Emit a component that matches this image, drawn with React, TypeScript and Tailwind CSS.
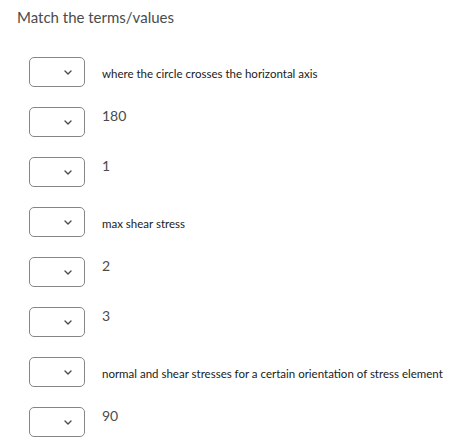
import React from 'react';

const rows: { label: string; big: boolean }[] = [
  { label: 'where the circle crosses the horizontal axis', big: false },
  { label: '180', big: true },
  { label: '1', big: true },
  { label: 'max shear stress', big: false },
  { label: '2', big: true },
  { label: '3', big: true },
  { label: 'normal and shear stresses for a certain orientation of stress element', big: false },
  { label: '90', big: true },
];

const Chevron = () => (
  <svg width="8" height="5" viewBox="0 0 8 5" fill="none">
    <path d="M1 1l3 3 3-3" stroke="#494c4e" strokeWidth="1.4" strokeLinecap="round" strokeLinejoin="round" />
  </svg>
);

export default function App() {
  return (
    <div className="w-[462px] h-[443px] bg-white overflow-hidden" style={{ fontFamily: 'Lato, "Liberation Sans", sans-serif' }}>
      <div className="pl-[17px] pt-[7px] text-[15px] leading-[20px] text-[#494c4e]">Match the terms/values</div>
      <div className="flex flex-col gap-[20px] pl-[29px] pt-[30px]">
        {rows.map((r, i) => (
          <div key={i} className="flex items-start">
            <div className="w-[56px] h-[30px] border border-[#868686] rounded-[5px] flex items-center pl-[34px] shrink-0">
              <Chevron />
            </div>
            {r.big ? (
              <span className="ml-[17px] text-[14px] leading-[18px] text-[#494c4e]">{r.label}</span>
            ) : (
              <span className="ml-[17px] mt-[10px] text-[11.5px] leading-[14px] text-[#202122] whitespace-nowrap">{r.label}</span>
            )}
          </div>
        ))}
      </div>
    </div>
  );
}
